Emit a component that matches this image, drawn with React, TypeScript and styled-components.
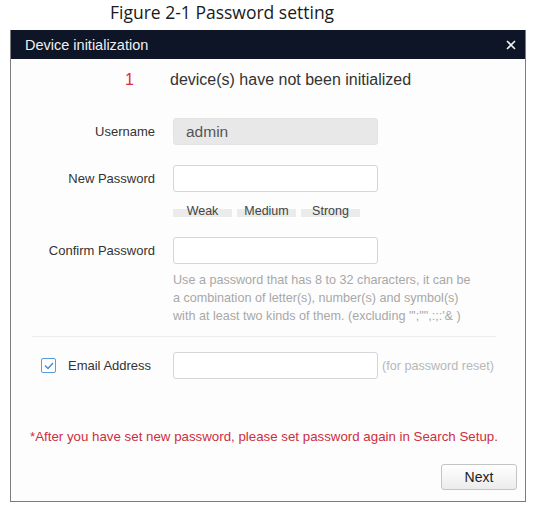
import React from "react";
import styled, { createGlobalStyle } from "styled-components";

const GlobalStyle = createGlobalStyle`
  html, body {
    margin: 0;
    padding: 0;
    background: #ffffff;
  }
  body {
    font-family: "Liberation Sans", Arial, sans-serif;
  }
`;

const Page = styled.div`
  width: 533px;
  height: 508px;
  display: flex;
  flex-direction: column;
  box-sizing: border-box;
`;

const Caption = styled.div`
  font-family: "Open Sans", "Noto Sans", sans-serif;
  font-size: 17.5px;
  line-height: 24px;
  color: #1a1a1a;
  padding-left: 110px;
  height: 30px;
`;

const Dialog = styled.div`
  margin-left: 10px;
  width: 516px;
  border: 1px solid #7c7c7c;
  border-top: none;
  box-sizing: border-box;
  background: #fdfdfd;
  display: flex;
  flex-direction: column;
  height: 472px;
`;

const TitleBar = styled.div`
  height: 29px;
  background: #0d1526;
  color: #eef0f3;
  display: flex;
  align-items: center;
  justify-content: space-between;
  padding: 0 9px 0 14px;
  font-size: 14.5px;
`;

const CloseButton = styled.span`
  display: flex;
  align-items: center;
  cursor: pointer;
`;

const Status = styled.div`
  margin-top: 11px;
  line-height: 20px;
  font-size: 16px;
  color: #333;
  display: flex;
  padding-left: 114px;
`;

const Count = styled.span`
  color: #d92b3a;
  width: 45px;
`;

const Row = styled.div<{ $top: number }>`
  margin-top: ${(p) => p.$top}px;
  display: grid;
  grid-template-columns: 144px 205px auto;
  column-gap: 18px;
  align-items: center;
`;

const Label = styled.label`
  text-align: right;
  font-size: 13px;
  color: #333;
`;

const CheckLabel = styled.label`
  display: flex;
  align-items: center;
  gap: 12px;
  padding-left: 30px;
  font-size: 13px;
  color: #333;
`;

const Input = styled.input<{ $disabled?: boolean }>`
  box-sizing: border-box;
  height: 27px;
  width: 205px;
  border: 1px solid ${(p) => (p.$disabled ? "#e3e3e3" : "#d6d6d6")};
  border-radius: 3px;
  background: ${(p) => (p.$disabled ? "#e8e8e8" : "#ffffff")};
  padding: 0 12px;
  font-family: "Liberation Sans", Arial, sans-serif;
  font-size: 15.5px;
  color: #555;
  outline: none;
  margin: 0;
`;

const Strength = styled.div`
  margin-top: 13px;
  margin-left: 162px;
  display: flex;
  gap: 5px;
`;

const Segment = styled.div`
  width: 59px;
  height: 12px;
  line-height: 12px;
  font-size: 12.5px;
  color: #444;
  text-align: center;
  background: linear-gradient(#fdfdfd 0 35%, #ebebeb 35% 100%);
`;

const Hint = styled.div`
  margin-top: 7px;
  margin-left: 162px;
  font-size: 12.6px;
  line-height: 18px;
  color: #a8a8a8;
  white-space: nowrap;
`;

const Divider = styled.div`
  margin: 11px 29px 0 21px;
  height: 1px;
  background: #ececec;
`;

const Aside = styled.span`
  margin-left: -14px;
  font-size: 12.6px;
  color: #b8b8b8;
`;

const Check = styled.span`
  width: 15px;
  height: 15px;
  box-sizing: border-box;
  border: 1.5px solid #5a9bd8;
  border-radius: 2px;
  display: flex;
  align-items: center;
  justify-content: center;
  background: #fff;
`;

const Note = styled.div`
  margin-top: 49px;
  padding-left: 19px;
  font-size: 13.3px;
  line-height: 18px;
  color: #cc2f40;
`;

const Footer = styled.div`
  margin-top: 18px;
  display: flex;
  justify-content: flex-end;
  padding-right: 8px;
`;

const Button = styled.button`
  width: 76px;
  height: 26px;
  border: 1px solid #c4c4c4;
  border-radius: 3px;
  background: linear-gradient(#ffffff, #ececec);
  font-family: "Liberation Sans", Arial, sans-serif;
  font-size: 14px;
  color: #222;
  cursor: pointer;
  padding: 0;
`;

export default function App() {
  return (
    <Page>
      <GlobalStyle />
      <Caption>Figure 2-1 Password setting</Caption>
      <Dialog>
        <TitleBar>
          <span>Device initialization</span>
          <CloseButton>
            <svg width="10" height="10" viewBox="0 0 10 10">
              <path d="M1 1 L9 9 M9 1 L1 9" stroke="#f2f2f2" strokeWidth="1.6" />
            </svg>
          </CloseButton>
        </TitleBar>
        <Status>
          <Count>1</Count>
          <span>device(s) have not been initialized</span>
        </Status>
        <Row $top={28}>
          <Label>Username</Label>
          <Input $disabled readOnly value="admin" />
        </Row>
        <Row $top={20}>
          <Label>New Password</Label>
          <Input type="password" />
        </Row>
        <Strength>
          <Segment>Weak</Segment>
          <Segment>Medium</Segment>
          <Segment>Strong</Segment>
        </Strength>
        <Row $top={20}>
          <Label>Confirm Password</Label>
          <Input type="password" />
        </Row>
        <Hint>
          Use a password that has 8 to 32 characters, it can be
          <br />
          a combination of letter(s), number(s) and symbol(s)
          <br />
          with at least two kinds of them. (excluding "';"",:;:'&amp; )
        </Hint>
        <Divider />
        <Row $top={15}>
          <CheckLabel>
            <Check>
              <svg width="10" height="8" viewBox="0 0 10 8">
                <path d="M1 3.5 L4 6.5 L9 1" stroke="#4a8fd3" strokeWidth="1.5" fill="none" />
              </svg>
            </Check>
            Email Address
          </CheckLabel>
          <Input type="text" />
          <Aside>(for password reset)</Aside>
        </Row>
        <Note>*After you have set new password, please set password again in Search Setup.</Note>
        <Footer>
          <Button>Next</Button>
        </Footer>
      </Dialog>
    </Page>
  );
}
